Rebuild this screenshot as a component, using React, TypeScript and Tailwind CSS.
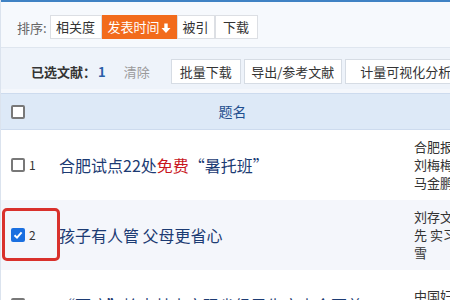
import React from 'react';

const sortOptions = [
  { label: '相关度', width: 'w-[52px]', active: false },
  { label: '发表时间', width: 'w-[75px]', active: true },
  { label: '被引', width: 'w-[38px]', active: false },
  { label: '下载', width: 'w-[43px]', active: false },
];

const tools = [
  { label: '批量下载', width: 'w-[70px]' },
  { label: '导出/参考文献', width: 'w-[98px]' },
  { label: '计量可视化分析', width: 'w-[122px]' },
];

const rows = [
  {
    no: 1,
    title: (
      <>
        合肥试点22处<span className="text-[#c8161d]">免费</span>“暑托班”
      </>
    ),
    authors: ['合肥报业全媒体', '刘梅梅', '马金鹏'],
    checked: false,
  },
  {
    no: 2,
    title: <>孩子有人管&nbsp;父母更省心</>,
    authors: ['刘存文', '先 实习生', '雪'],
    checked: true,
  },
  {
    no: 3,
    title: <>“两癌”检查基本实现省级民生实事全覆盖</>,
    authors: ['中国妇女报', '本报记者'],
    checked: false,
  },
];

const Box = ({ checked }: { checked?: boolean }) =>
  checked ? (
    <span className="w-[14px] h-[14px] rounded-[2px] bg-[#1a6fe0] flex items-center justify-center shrink-0">
      <svg width="10" height="10" viewBox="0 0 10 10">
        <path d="M1.5 5.2 L4 7.6 L8.6 2.4" stroke="white" strokeWidth="2" fill="none" />
      </svg>
    </span>
  ) : (
    <span className="w-[14px] h-[14px] rounded-[2px] border-2 border-[#787878] bg-white shrink-0" />
  );

export default function App() {
  return (
    <div className="w-[450px] h-[300px] overflow-hidden bg-white font-['Noto_Sans_CJK_SC','Noto_Sans',sans-serif]">
      <div className="w-[620px] border-l border-[#dbe3ee]">
        <div className="h-[2px] bg-[#3f82c4]" />

        {/* 排序 */}
        <div className="flex items-center pl-[16px] pt-[13px] pb-[8px] bg-[#f6f9fd] border-b border-[#dfe6ef]">
          <span className="text-[13px] text-[#666] mr-[3px] leading-none">排序:</span>
          <div className="flex">
            {sortOptions.map(o => (
              <div
                key={o.label}
                className={`${o.width} h-[24px] flex items-center justify-center text-[13px] border ${
                  o.active ? 'bg-[#f26b1c] border-[#f26b1c] text-white' : 'bg-white border-[#dcdfe4] text-[#333]'
                }`}
              >
                {o.label}
                {o.active && (
                  <svg width="10" height="11" viewBox="0 0 10 11" className="ml-[1px] mt-[3px]">
                    <path d="M3.3 0.5 H6.7 V5 H9.5 L5 10 L0.5 5 H3.3 Z" fill="white" />
                  </svg>
                )}
              </div>
            ))}
          </div>
        </div>

        {/* 已选文献 */}
        <div className="flex items-center pl-[30px] pt-[11px] pb-[5px] bg-[#eef3fa]">
          <span className="text-[13px] font-bold text-[#333]">已选文献：</span>
          <span className="text-[13px] font-bold text-[#2a5ea8] ml-[2px]">1</span>
          <span className="text-[13px] text-[#9a9a9a] ml-[18px]">清除</span>
          <div className="flex gap-[3px] ml-[21px]">
            {tools.map(t => (
              <div
                key={t.label}
                className={`${t.width} h-[25px] flex items-center justify-center text-[13px] text-[#333] bg-white border border-[#d6dce4]`}
              >
                {t.label}
              </div>
            ))}
          </div>
        </div>

        <div className="h-[4px] bg-[#f4f7fc]" />

        {/* 表头 */}
        <div className="flex items-center h-[37px] bg-[#dde9f7] border-y border-[#cddbee]">
          <div className="w-[58px] pl-[10px] flex items-center">
            <Box />
          </div>
          <div className="w-[347px] text-center text-[14px] text-[#1f4f8f]">题名</div>
        </div>

        {rows.map(r => (
          <div
            key={r.no}
            className={`relative flex items-center h-[70px] ${r.checked ? 'bg-[#f4f6fb]' : 'bg-white'}`}
          >
            <div className="w-[58px] pl-[10px] flex items-center gap-[4px]">
              <Box checked={r.checked} />
              <span className="text-[12px] text-[#333]">{r.no}</span>
            </div>
            <div className="w-[347px] text-[16px] text-[#1c3b73] whitespace-nowrap">{r.title}</div>
            <div className="pl-[8px] text-[13px] leading-[18px] text-[#333]">
              {r.authors.map(a => (
                <div key={a} className="whitespace-nowrap">{a}</div>
              ))}
            </div>
            {r.checked && (
              <div className="absolute left-[1px] top-[8px] w-[58px] h-[53px] border-[3px] border-[#d9312c] rounded-[5px]" />
            )}
          </div>
        ))}
      </div>
    </div>
  );
}
